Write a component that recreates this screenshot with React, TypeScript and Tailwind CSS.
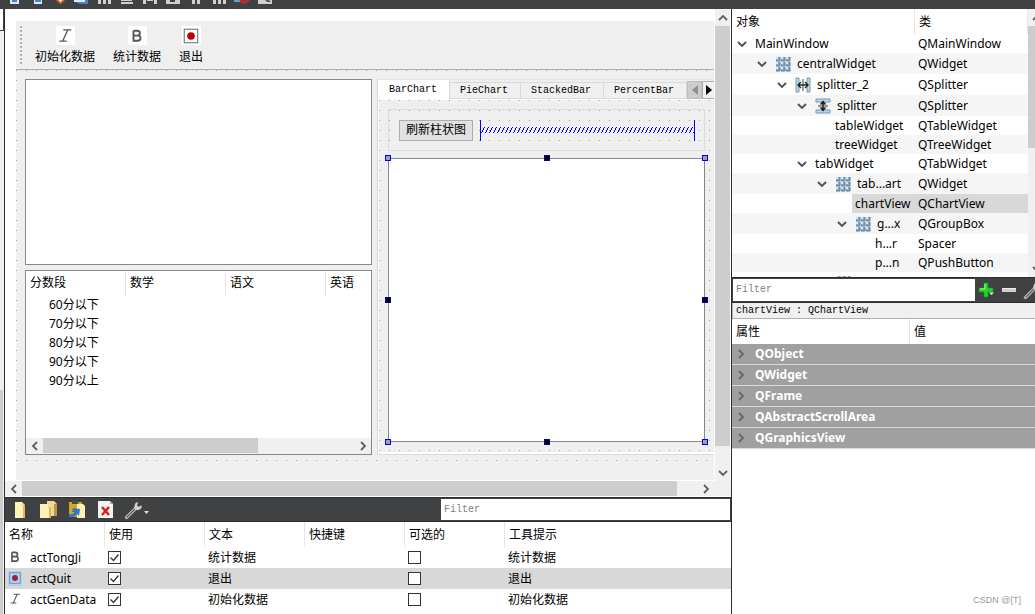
import { useState } from 'react';
import type { ReactNode } from 'react';
import clsx from 'clsx';

type Direction = 'up' | 'down' | 'left' | 'right';

const arrows: Record<Direction, string> = {
  up: 'M1 7l4-4 4 4',
  down: 'M1 3l4 4 4-4',
  left: 'M7 1L3 5l4 4',
  right: 'M3 1l4 4-4 4',
};

const tabs = ['BarChart', 'PieChart', 'StackedBar', 'PercentBar'];

const scores = ['60分以下', '70分以下', '80分以下', '90分以下', '90分以上'];

const objects = [
  { name: 'MainWindow', type: 'QMainWindow', level: 0, open: true },
  { name: 'centralWidget', type: 'QWidget', level: 1, open: true, icon: 'grid' },
  { name: 'splitter_2', type: 'QSplitter', level: 2, open: true, icon: 'hsplit' },
  { name: 'splitter', type: 'QSplitter', level: 3, open: true, icon: 'vsplit' },
  { name: 'tableWidget', type: 'QTableWidget', level: 4 },
  { name: 'treeWidget', type: 'QTreeWidget', level: 4 },
  { name: 'tabWidget', type: 'QTabWidget', level: 3, open: true },
  { name: 'tab...art', type: 'QWidget', level: 4, open: true, icon: 'grid' },
  { name: 'chartView', type: 'QChartView', level: 5, selected: true },
  { name: 'g...x', type: 'QGroupBox', level: 5, open: true, icon: 'grid' },
  { name: 'h...r', type: 'Spacer', level: 6 },
  { name: 'p...n', type: 'QPushButton', level: 6 },
  { name: '', type: '', level: 4, icon: 'grid' },
];

const propertyGroups = ['QObject', 'QWidget', 'QFrame', 'QAbstractScrollArea', 'QGraphicsView'];

const actions = [
  { name: 'actTongJi', text: '统计数据', icon: 'bold' },
  { name: 'actQuit', text: '退出', icon: 'quit', selected: true },
  { name: 'actGenData', text: '初始化数据', icon: 'italic' },
];

function Arrow({ dir, className }: { dir: Direction; className?: string }) {
  return (
    <svg className={clsx('h-[10px] w-[10px] shrink-0', className)} viewBox="0 0 10 10" fill="none" stroke="currentColor" strokeWidth={1.8}>
      <path d={arrows[dir]} />
    </svg>
  );
}

function ScrollButton({ dir, className }: { dir: Direction; className: string }) {
  return (
    <button type="button" aria-label={`scroll ${dir}`} className={clsx('flex shrink-0 items-center justify-center text-[#606060]', className)}>
      <Arrow dir={dir} />
    </button>
  );
}

function ActionIcon({ kind, selected, className }: { kind: string; selected?: boolean; className: string }) {
  if (kind === 'quit') {
    return (
      <svg className={className} viewBox="0 0 16 16">
        <rect x="2" y="2" width="12" height="12" fill={selected ? '#b0d4f0' : '#fff'} stroke={selected ? '#6c8aa3' : '#777'} />
        <circle cx="8" cy="8" r="3.4" fill={selected ? '#9b2145' : '#c40000'} />
      </svg>
    );
  }
  return (
    <svg className={className} viewBox="0 0 16 16" fill="none" stroke="#555" strokeWidth={kind === 'bold' ? 1.9 : 1.2}>
      {kind === 'bold' ? (
        <path d="M4.500 2.800v10h4.200q2.800 0 2.800-2.700T8.700 7.600H4.500M4.500 2.800h3.800q2.500 0 2.500 2.400T8.300 7.600" />
      ) : (
        <path d="M6.500 2.500h7M3 12.500h6.500M10.500 2.500l-4.500 10" />
      )}
    </svg>
  );
}

function WidgetIcon({ kind }: { kind: string }) {
  return (
    <svg className="h-4 w-4 shrink-0" viewBox="0 0 16 16">
      {kind === 'grid' &&
        [1, 6, 11].map((y) =>
          [1, 6, 11].map((x) => (
            <g key={`${x}-${y}`}>
              <rect x={x} y={y} width="4" height="4" fill="#86a9c6" />
              <path d={`M${x} ${y + 4}h4v-4`} fill="none" stroke="#5d7892" />
              <rect x={x} y={y} width="2" height="2" fill="#d5ebfa" />
            </g>
          ))
        )}
      {kind === 'hsplit' && (
        <>
          <path d="M1 1h3v14H1zM12 1h3v14h-3z" fill="#b6d9ef" stroke="#7996ac" />
          <path d="M7.500 2v12M8.500 2v12" stroke="#777" strokeWidth=".7" />
          <path d="M3 8h10M6 5L3 8l3 3M10 5l3 3-3 3" fill="none" stroke="#222" strokeWidth="1.4" />
        </>
      )}
      {kind === 'vsplit' && (
        <>
          <path d="M1 1h14v3H1zM1 12h14v3H1z" fill="#b6d9ef" stroke="#7996ac" />
          <path d="M3 7.500h10M3 8.500h10" stroke="#777" strokeWidth=".7" />
          <path d="M8 3v10" stroke="#222" strokeWidth="1.4" />
          <path d="M4.500 6.500L8 2.500l3.500 4zM4.500 9.500l3.500 4 3.500-4z" fill="#222" />
        </>
      )}
    </svg>
  );
}

function WrenchIcon() {
  return (
    <svg className="h-5 w-5 shrink-0" viewBox="0 0 20 20" fill="none">
      <path d="M2.500 17.500L12 8" stroke="#a9a9a9" strokeWidth="3.4" strokeLinecap="round" />
      <path d="M3 17L12 8" stroke="#4a4a4a" strokeWidth="1" />
      <path d="M17.600 5.200l-3 1.500-1.500-1.200 1-3.400q-3.600.6-3.600 4.200l-.3 2.200 1.600 1.600 2.400-.2q4-.4 3.400-4.700z" fill="#d0d0d0" />
    </svg>
  );
}

function TopIcons() {
  return (
    <svg className="h-[5px] w-[280px]" viewBox="0 0 280 5">
      <path d="M10 0h9v4h-9zM34 0h8v4h-8z" fill="#dce8f8" />
      <path d="M12 0h5v2h-5zM35 0h6v2h-6z" fill="#4b80c5" />
      <path d="M56 0h9l-4.500 4z" fill="#e5702c" />
      <path d="M59 0h3l-1.500 2z" fill="#fff" />
      <path d="M74 0h12v2H74z" fill="#dce8f8" />
      <path d="M75 2h10V0h3v4h-8z" fill="#4b80c5" />
      <path d="M98 0h3v4h-3zM103 0h3v4h-3zM108 0h3v4h-3zM121 0h11v1h-11zM121 2h12v2h-12zM143 0h3v4h-3zM154 0h3v4h-3zM147 0h6v1h-6zM166 0h4v2h5V0h5v4h-14zM192 0h3v4h-3zM197 0h3v4h-3zM213 0h3v4h-3zM218 0h3v4h-3zM223 0h3v4h-3zM258 0h14v4h-14z" fill="#d0d0d0" />
      <path d="M234 0h6v2h-6z" fill="#6b9bd0" />
      <path d="M240 0q4 6 9 0" fill="#8c3838" stroke="#d52b2b" strokeWidth="1.500" />
      <path d="M265 0h4l2 2h-4z" fill="#555" />
    </svg>
  );
}

function Handle({ className, mid }: { className: string; mid?: boolean }) {
  return <span className={clsx('absolute h-[6px] w-[6px] border', mid ? 'border-[#0000a0] bg-black' : 'border-[#0000ff] bg-[#a0a0a0]', className)} />;
}

function DesignerToolButton({ label, children }: { label: string; children: ReactNode }) {
  return (
    <button type="button" className="flex flex-col items-center gap-1">
      <span className="flex h-[19px] w-[19px] items-center justify-center bg-white">{children}</span>
      <span className="leading-4">{label}</span>
    </button>
  );
}

function ScoreTree() {
  return (
    <div className="flex min-h-0 flex-1 flex-col border border-[#828790] bg-white">
      <div className="min-h-0 flex-1 overflow-hidden">
        <table className="w-full table-fixed border-separate border-spacing-0">
          <thead>
            <tr className="h-[25px] text-left">
              <th className="w-[100px] border-r border-[#e5e5e5] pl-1 font-normal">分数段</th>
              <th className="w-[100px] border-r border-[#e5e5e5] pl-1 font-normal">数学</th>
              <th className="w-[100px] border-r border-[#e5e5e5] pl-1 font-normal">语文</th>
              <th className="pl-1 font-normal">英语</th>
            </tr>
          </thead>
          <tbody>
            {scores.map((score) => (
              <tr key={score} className="h-[19px]">
                <td className="pl-[23px] leading-4">{score}</td>
                <td />
                <td />
                <td />
              </tr>
            ))}
          </tbody>
        </table>
      </div>
      <div className="flex h-4 border-b border-[#f0f0f0] bg-[#f0f0f0]">
        <ScrollButton dir="left" className="w-[17px]" />
        <div className="flex-1">
          <div className="h-full w-[69%] bg-[#cdcdcd]" />
        </div>
        <ScrollButton dir="right" className="w-[17px]" />
      </div>
    </div>
  );
}

function ChartTabs() {
  const [active, setActive] = useState('BarChart');

  return (
    <div className="flex min-w-0 flex-1 flex-col">
      <div role="tablist" className="flex h-5 items-end overflow-hidden border-t border-dotted border-[#d5d5d5] font-['Liberation_Mono','Noto_Sans_CJK_SC',monospace] text-[10px]">
        {tabs.map((tab) => (
          <button
            key={tab}
            type="button"
            role="tab"
            aria-selected={tab === active}
            onClick={() => setActive(tab)}
            className={clsx(
              'shrink-0 border-r border-[#d9d9d9]',
              tab === active ? 'h-full border-l bg-white pr-3 pl-[11px]' : 'h-[17px] border-t border-b bg-[#f0f0f0] pr-3 pl-[10px]'
            )}
          >
            {tab}
          </button>
        ))}
        <div className="flex h-[18px] min-w-0 flex-1 text-black">
          <button type="button" aria-label="previous tab" className="flex w-[15px] shrink-0 items-center justify-center border border-[#bdbdbd] bg-[#cdcdcd] text-[#909090]">
            <svg className="h-[10px] w-[6px]" viewBox="0 0 6 10" fill="currentColor"><path d="M6 0v10L0 5z" /></svg>
          </button>
          <button type="button" aria-label="next tab" className="flex min-w-0 flex-1 items-center justify-center border border-r-0 border-[#adadad] bg-[#f0f0f0]">
            <svg className="h-[10px] w-[6px]" viewBox="0 0 6 10" fill="currentColor"><path d="M0 0v10l6-5z" /></svg>
          </button>
        </div>
      </div>

      <div className="flex min-h-0 flex-1 flex-col border-b border-l border-[#d9d9d9]">
        <div className="flex min-h-0 flex-1 flex-col gap-[7px] border-t border-b-2 border-l border-white bg-[conic-gradient(from_270deg_at_1px_1px,#a0a0a0_90deg,transparent_0)] bg-size-[10px_10px] p-[9px] pb-[10px]">
          <div className="flex h-[42px] shrink-0 items-center gap-[7px] border border-[#dcdcdc] pr-[9px] pl-[10px]">
            <button type="button" className="h-[21px] shrink-0 border border-[#adadad] bg-[#e1e1e1] px-[6px]">
              刷新柱状图
            </button>
            <div className="flex h-[21px] min-w-0 flex-1 border-x border-[#0000ff]">
              <svg className="h-full min-w-0 flex-1" shapeRendering="crispEdges">
                <defs>
                  <pattern id="spring" width="4" height="21" patternUnits="userSpaceOnUse">
                    <path d="M0 12h1v1H0zM1 10h1v2H1zM2 8h1v2H2zM3 7h1v1H3z" fill="#0000ff" />
                  </pattern>
                </defs>
                <rect width="100%" height="100%" fill="url(#spring)" />
              </svg>
            </div>
          </div>
          <div className="relative min-h-0 flex-1 border border-[#828790] bg-white">
            <Handle className="-top-1 -left-1" />
            <Handle className="-top-1 left-1/2 -translate-x-1/2" mid />
            <Handle className="-top-1 -right-1" />
            <Handle className="top-1/2 -left-1 -translate-y-1/2" mid />
            <Handle className="top-1/2 -right-1 -translate-y-1/2" mid />
            <Handle className="-bottom-1 -left-1" />
            <Handle className="-bottom-1 left-1/2 -translate-x-1/2" mid />
            <Handle className="-right-1 -bottom-1" />
          </div>
        </div>
      </div>
    </div>
  );
}

function FormEditor() {
  return (
    <div className="flex min-h-0 flex-1 flex-col bg-[#f0f0f0]">
      <div className="flex min-h-0 flex-1">
        <div className="flex min-w-0 flex-1 flex-col bg-white pt-3 pr-px pb-px pl-[11px]">
          <div className="flex min-h-0 flex-1 flex-col bg-[#efefef]">
            {/* Form toolbar */}
            <div className="flex h-[49px] shrink-0 border-b border-[#b0b0b0] pt-[5px] pl-1">
              <div className="h-[38px] w-[2px] bg-[conic-gradient(from_270deg_at_2px_2px,#b0b0b0_90deg,transparent_0)] bg-size-[4px_4px]" />
              <div className="flex items-start gap-[18px] pl-[13px]">
                <DesignerToolButton label="初始化数据"><ActionIcon kind="italic" className="h-[18px] w-[18px]" /></DesignerToolButton>
                <DesignerToolButton label="统计数据"><ActionIcon kind="bold" className="h-4 w-4" /></DesignerToolButton>
                <DesignerToolButton label="退出"><ActionIcon kind="quit" className="h-[18px] w-[18px]" /></DesignerToolButton>
              </div>
            </div>

            {/* Central widget */}
            <div className="flex min-h-0 flex-1 bg-[conic-gradient(from_270deg_at_1px_1px,#a0a0a0_90deg,transparent_0)] bg-size-[10px_10px] pt-[9px] pb-[7px] pl-[9px]">
              <div className="flex min-w-0 flex-1 gap-[5px] bg-[#efefef]">
                <div className="flex w-[347px] shrink-0 flex-col gap-[5px]">
                  <div className="min-h-0 flex-1 border border-[#828790] bg-white" />
                  <ScoreTree />
                </div>
                <ChartTabs />
              </div>
            </div>
            <div className="h-[18px] shrink-0" />
          </div>
        </div>
        <div className="flex w-4 flex-col border-r border-white">
          <ScrollButton dir="up" className="h-[17px]" />
          <div className="flex-1">
            <div className="h-[96%] bg-[#cdcdcd]" />
          </div>
          <ScrollButton dir="down" className="h-[17px]" />
        </div>
      </div>
      <div className="flex h-4 shrink-0 border-b border-white pr-[17px]">
        <ScrollButton dir="left" className="w-[17px]" />
        <div className="flex-1">
          <div className="h-full w-[97%] bg-[#cdcdcd]" />
        </div>
        <ScrollButton dir="right" className="w-[17px]" />
      </div>
    </div>
  );
}

function CheckBox({ label, defaultChecked }: { label: string; defaultChecked?: boolean }) {
  return (
    <span className="grid h-[13px] w-[13px]">
      <input
        type="checkbox"
        aria-label={label}
        defaultChecked={defaultChecked}
        className="peer col-start-1 row-start-1 h-[13px] w-[13px] appearance-none border border-[#333] bg-white"
      />
      <svg className="pointer-events-none invisible col-start-1 row-start-1 h-[13px] w-[13px] peer-checked:visible" viewBox="0 0 13 13" fill="none" stroke="#333" strokeWidth={1.3}>
        <path d="M2.500 6.500l3 3 5-6" />
      </svg>
    </span>
  );
}

function ActionEditor() {
  return (
    <div className="shrink-0 bg-white">
      <div className="flex h-[25px] items-stretch border-t border-b border-[#2c2d2e] bg-[#404142]">
        <div className="flex flex-1 items-center gap-[10px] pl-[7px]">
          <button type="button" aria-label="new action">
            <svg className="h-[18px] w-[16px]" viewBox="0 0 16 18">
              <path d="M3 1h7l3 3v13H3z" fill="#fff3b8" />
              <path d="M10 1v3h3v13h-2V5z" fill="#e1bd50" />
            </svg>
          </button>
          <button type="button" aria-label="copy action">
            <svg className="h-[18px] w-[20px]" viewBox="0 0 20 18">
              <path d="M9 0h7l3 3v12H9z" fill="#efd890" />
              <path d="M16 0v3h3v12h-3z" fill="#bb9548" />
              <path d="M2 3h8l3 3v11H2z" fill="#fff0b8" />
              <path d="M10 3v3h3v11h-2V7z" fill="#d8b565" />
            </svg>
          </button>
          <button type="button" aria-label="paste action">
            <svg className="h-[18px] w-[18px]" viewBox="0 0 18 18">
              <path d="M1 1h13v15H1z" fill="#d9a51e" />
              <path d="M4 0h6v3H4z" fill="#4b4b4b" />
              <path d="M9 3h6l2 2v12H9z" fill="#fff0b8" />
              <path d="M1 13q5 1 5-2H4l1-4 7 1-1 7-2-2q-3 4-8 3z" fill="#3177c5" />
            </svg>
          </button>
          <button type="button" aria-label="delete action">
            <svg className="h-[18px] w-[18px]" viewBox="0 0 18 18">
              <path d="M2 0h12l3 3v14H2z" fill="#f3f3f3" />
              <path d="M14 0v3h3z" fill="#aaa" />
              <path d="M6 6l7 8M13 6l-7 8" stroke="#dc2020" strokeWidth="2.500" />
            </svg>
          </button>
          <button type="button" aria-label="configure" className="flex items-center">
            <WrenchIcon />
            <svg className="mt-[6px] h-[3px] w-[5px]" viewBox="0 0 5 3" fill="#ddd"><path d="M0 0h5L2.500 3z" /></svg>
          </button>
        </div>
        <input
          aria-label="filter actions"
          placeholder="Filter"
          className="w-[290px] border border-l-0 border-[#404142] bg-white pl-[3px] font-['Liberation_Mono',monospace] text-[10px] placeholder:text-[#808080]"
        />
      </div>
      <table className="w-full table-fixed border-separate border-spacing-0">
        <thead>
          <tr className="h-[25px] text-left">
            {['名称', '使用', '文本', '快捷键', '可选的'].map((title) => (
              <th key={title} className="w-[100px] border-r border-[#e5e5e5] pl-1 font-normal">{title}</th>
            ))}
            <th className="pl-1 font-normal">工具提示</th>
          </tr>
        </thead>
        <tbody>
          {actions.map((action) => (
            <tr key={action.name} className={clsx('h-[21px]', action.selected && 'bg-[#d8d8d8]')}>
              <td>
                <div className="flex items-center gap-2 pl-[3px]">
                  <span className={clsx('h-[15px] w-[14px]', action.selected && 'bg-[#b0d4f0]')}>
                    <ActionIcon kind={action.icon} selected={action.selected} className="h-[14px] w-[14px]" />
                  </span>
                  {action.name}
                </div>
              </td>
              <td className="pl-[3px]"><CheckBox label={`${action.name} used`} defaultChecked /></td>
              <td className="pl-[3px]">{action.text}</td>
              <td />
              <td className="pl-[3px]"><CheckBox label={`${action.name} checkable`} /></td>
              <td className="pl-[3px]">{action.text}</td>
            </tr>
          ))}
        </tbody>
      </table>
      <div className="h-1" />
    </div>
  );
}

function ObjectInspector() {
  return (
    <div className="flex h-[268px] shrink-0 overflow-hidden bg-white">
      <div className="min-w-0 flex-1 overflow-hidden">
        <table className="w-full table-fixed border-separate border-spacing-0">
          <thead>
            <tr className="h-[25px] text-left">
              <th className="w-[183px] border-r border-[#e5e5e5] pl-1 font-normal">对象</th>
              <th className="border-r border-[#e5e5e5] pl-1 font-normal">类</th>
            </tr>
          </thead>
          <tbody>
            {objects.map((item, i) => (
              <tr key={i} className={clsx(item.icon ? 'h-[21px]' : 'h-[19px]', i % 2 === 1 && 'bg-[#f5f5f5]')}>
                <td>
                  <div className="flex items-center" style={{ paddingLeft: item.level * 20 }}>
                    <span className="flex w-5 shrink-0 justify-center text-[#505050]">{item.open && <Arrow dir="down" />}</span>
                    <span className={clsx('flex min-w-0 flex-1 items-center gap-[6px] pl-[3px] leading-[19px] whitespace-nowrap', item.selected && 'bg-[#d8d8d8]')}>
                      {item.icon && <WidgetIcon kind={item.icon} />}
                      {item.name}
                    </span>
                  </div>
                </td>
                <td className={clsx('pl-[3px] leading-[19px]', item.selected && 'bg-[#d8d8d8]')}>{item.type}</td>
              </tr>
            ))}
          </tbody>
        </table>
      </div>
      <div className="flex w-[7px] flex-col overflow-hidden bg-[#f0f0f0]">
        <ScrollButton dir="up" className="h-[17px] w-[17px]" />
        <div className="flex-1">
          <div className="h-[52%] bg-[#cdcdcd]" />
        </div>
        <ScrollButton dir="down" className="h-[17px] w-[17px]" />
      </div>
    </div>
  );
}

function PropertyEditor() {
  return (
    <div className="flex min-h-0 flex-1 flex-col bg-white">
      <div className="flex h-[26px] shrink-0 overflow-hidden border-t border-b border-[#2c2d2e] bg-[#404142] py-px pl-px">
        <input
          aria-label="filter properties"
          placeholder="Filter"
          className="min-w-0 flex-1 bg-white pl-[3px] font-['Liberation_Mono',monospace] text-[10px] placeholder:text-[#808080]"
        />
        <div className="flex w-[60px] shrink-0 items-center gap-[6px] overflow-hidden pl-[3px]">
          <button type="button" aria-label="add property" className="shrink-0">
            <svg className="h-4 w-[17px]" viewBox="0 0 17 16">
              <path d="M6 1h4v5h5v4h-5v5H6v-5H1V6h5z" fill="#24d424" stroke="#15951c" strokeWidth=".7" />
              <path d="M7 2v5H2" fill="none" stroke="#a0ffa0" />
              <path d="M11 10.500h5L13.500 13z" fill="#eee" />
            </svg>
          </button>
          <button type="button" aria-label="remove property" className="shrink-0">
            <svg className="h-4 w-4" viewBox="0 0 16 16">
              <rect x="1" y="6" width="14" height="4" fill="#d0d0d0" />
              <path d="M1 6.500h14" stroke="#eee" />
            </svg>
          </button>
          <button type="button" aria-label="configure properties" className="shrink-0"><WrenchIcon /></button>
        </div>
      </div>
      <div className="h-4 shrink-0 border-b border-l border-[#b0b0b0] bg-[#f0f0f0] pl-[3px] font-['Liberation_Mono',monospace] text-[10px] leading-4">
        chartView : QChartView
      </div>
      <table className="w-full table-fixed border-separate border-spacing-0">
        <thead>
          <tr className="h-[25px] text-left">
            <th className="w-[178px] border-r border-[#e5e5e5] pl-1 font-normal">属性</th>
            <th className="pl-1 font-normal">值</th>
          </tr>
        </thead>
        <tbody>
          {propertyGroups.map((group) => (
            <tr key={group} className="h-[21px] bg-[#a0a0a0] font-bold text-white">
              <td colSpan={2} className="border-b border-[#d8d8d8]">
                <div className="flex items-center gap-[9px] pl-1 leading-4">
                  <Arrow dir="right" className="text-[#666]" />
                  {group}
                </div>
              </td>
            </tr>
          ))}
        </tbody>
      </table>
      <div className="mt-auto pr-[14px] pb-[6px] text-right font-['Liberation_Sans',sans-serif] text-[9px] leading-4 text-[#999]">CSDN @[T]</div>
    </div>
  );
}

export default function App() {
  return (
    <div className="flex h-screen flex-col overflow-hidden bg-white font-['Noto_Sans','Noto_Sans_CJK_SC',sans-serif] text-xs text-black">
      <header className="h-[9px] shrink-0 overflow-hidden bg-[#404142]">
        <TopIcons />
      </header>
      <div className="flex min-h-0 flex-1">
        <div className="flex w-[5px] shrink-0 flex-col border-r border-[#2c2d2e] bg-[#f0f0f0]">
          <div className="h-[22px] border-r border-b border-[#404142] bg-white" />
          <div className="flex-1" />
          <div className="h-[224px] w-[3px] bg-[#cdcdcd]" />
        </div>
        <main className="flex min-w-0 flex-1 flex-col border-r border-[#2c2d2e]">
          <FormEditor />
          <ActionEditor />
        </main>
        <aside className="flex w-[303px] shrink-0 flex-col">
          <ObjectInspector />
          <PropertyEditor />
        </aside>
      </div>
    </div>
  );
}
